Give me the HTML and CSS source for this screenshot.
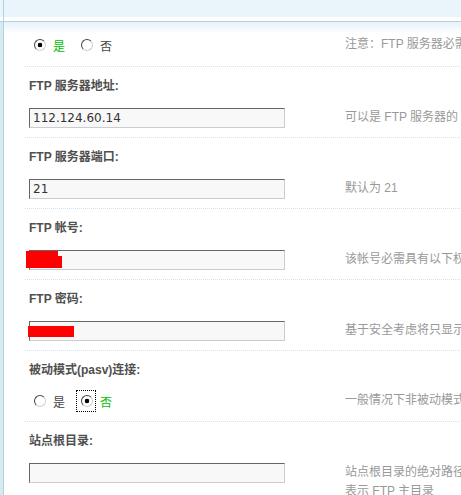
FILE: index.html
```html
<!DOCTYPE html>
<html lang="zh-CN">
<head>
    <meta charset="UTF-8">
    <title>远程附件 FTP 设置</title>
    <link rel="stylesheet" href="styles.css">
</head>
<body>
    <div class="head"></div>
    <div class="wrap">
        <div class="side"></div>
        <div class="main">
            <!-- 启用远程附件 -->
            <div class="setting first">
                <div class="field">
                    <ul class="radios">
                        <li class="checked"><input type="radio" name="remote" checked>是</li>
                        <li><input type="radio" name="remote">否</li>
                    </ul>
                </div>
                <div class="tip">注意：FTP 服务器必需支持 SIZE 命令，否则远程附件将无法正常使用</div>
            </div>

            <div class="setting">
                <div class="label">FTP 服务器地址:</div>
                <div class="field"><input class="txt" type="text" value="112.124.60.14"></div>
                <div class="tip">可以是 FTP 服务器的 IP 地址或域名</div>
            </div>

            <div class="setting">
                <div class="label">FTP 服务器端口:</div>
                <div class="field"><input class="txt" type="text" value="21"></div>
                <div class="tip">默认为 21</div>
            </div>

            <div class="setting">
                <div class="label">FTP 帐号:</div>
                <div class="field">
                    <input class="txt" type="text" value="">
                    <span class="redact acc-a"></span>
                    <span class="redact acc-b"></span>
                </div>
                <div class="tip">该帐号必需具有以下权限：读取文件 写入文件 删除文件 创建目录 子目录继承</div>
            </div>

            <div class="setting">
                <div class="label">FTP 密码:</div>
                <div class="field">
                    <input class="txt" type="text" value="">
                    <span class="redact pwd"></span>
                </div>
                <div class="tip">基于安全考虑将只显示 FTP 密码的第一位和最后一位，中间显示八个 * 号</div>
            </div>

            <div class="setting radio-row">
                <div class="label">被动模式(pasv)连接:</div>
                <div class="field">
                    <ul class="radios">
                        <li><input type="radio" name="pasv">是</li>
                        <li class="checked"><span class="focus-ring"></span><input type="radio" name="pasv" checked>否</li>
                    </ul>
                </div>
                <div class="tip">一般情况下非被动模式即可，如果存在上传失败问题，可尝试打开此设置</div>
            </div>

            <div class="setting">
                <div class="label">站点根目录:</div>
                <div class="field"><input class="txt" type="text" value=""></div>
                <div class="tip">站点根目录的绝对路径或相对于 FTP 主目录的相对路径，结尾不要加斜杠“/”，“.”<br>表示 FTP 主目录</div>
            </div>
        </div>
    </div>
</body>
</html>
```
FILE: styles.css
```css
html, body {
    overflow: hidden;
}
body {
    margin: 0;
    background-color: #ffffff;
    font-family: "Liberation Sans", "Noto Sans CJK SC", sans-serif;
    font-size: 12px;
    color: #555;
}

/* cabecera */
.head {
    height: 21px;
    border-bottom: 1px solid #b5d0db;
    background:
        linear-gradient(to right, transparent 3px, #b5d0db 3px, #b5d0db 4px, transparent 4px),
        linear-gradient(#eaf4fb 17px, #ffffff 17px);
}
.wrap {
    display: flex;
}
.side {
    width: 3px;
    flex: none;
    background-color: #d6eaf4;
    border-right: 1px solid #b5d0db;
    min-height: 600px;
}
.main {
    flex: none;
    width: 980px;
    background: linear-gradient(#e6f2f9, #ffffff 12px) no-repeat;
}

/* filas */
.setting {
    display: grid;
    grid-template-columns: 316px 1fr;
    margin-left: 21px;
    padding: 9px 4px 9px;
    border-bottom: 1px dotted #cfe3f1;
}
.setting.first {
    padding: 13px 4px 11px;
}
.label {
    grid-column: 1 / -1;
    height: 20px;
    line-height: 20px;
    font-weight: bold;
    color: #4f4f4f;
    margin-bottom: 12px;
}
.radio-row .label {
    margin-bottom: 11px;
}
.radio-row {
    padding-bottom: 10px;
}
.field {
    position: relative;
    height: 20px;
}
.tip {
    color: #999;
    line-height: 19px;
    white-space: nowrap;
}

/* campos */
.txt {
    box-sizing: border-box;
    width: 256px;
    height: 20px;
    margin: 0;
    padding: 0 3px;
    border: 1px solid;
    border-color: #666 #ccc #ccc #666;
    background-color: #f8f8f8;
    font-family: "DejaVu Sans", sans-serif;
    font-size: 12px;
    color: #333;
}

.radios {
    list-style: none;
    margin: 0;
    padding: 0 0 0 5px;
    display: flex;
    height: 20px;
}
.radios li {
    position: relative;
    display: flex;
    align-items: center;
    gap: 7px;
    margin-right: 16px;
    color: #444;
}
.radios li.checked {
    color: #00c000;
}
.radios input {
    appearance: none;
    -webkit-appearance: none;
    width: 12px;
    height: 12px;
    margin: 0;
    border: 1px solid;
    border-color: #444 #d4d0c8 #d4d0c8 #444;
    border-radius: 50%;
    background-color: #fff;
}
.radios input:checked {
    background: radial-gradient(circle, #000 0, #000 2px, #fff 2.6px);
}

/* marco de foco punteado */
.focus-ring {
    position: absolute;
    left: -5px;
    top: -1px;
    width: 20px;
    height: 22px;
    box-sizing: border-box;
    border: 1px dotted #000;
}

/* datos ocultos */
.redact {
    position: absolute;
    background-color: #ff0000;
}
.acc-a {
    left: -3px;
    top: 1px;
    width: 32px;
    height: 6px;
}
.acc-b {
    left: -3px;
    top: 6px;
    width: 36px;
    height: 12px;
}
.pwd {
    left: -1px;
    top: 5px;
    width: 46px;
    height: 11px;
}
```
